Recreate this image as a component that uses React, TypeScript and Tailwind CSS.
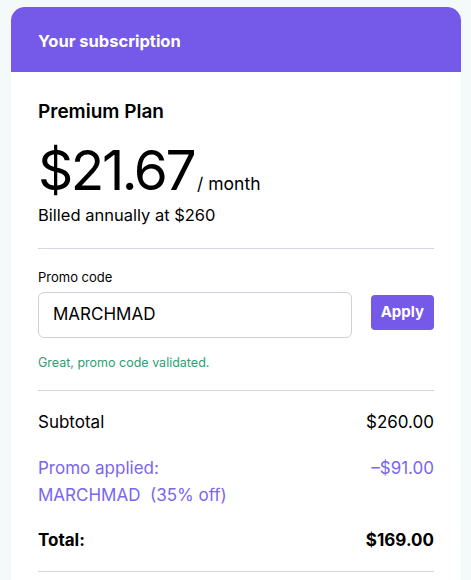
export default function App() {
  return (
    <div className="min-h-[580px] bg-[#f4f9fa] pt-[7px] pl-[11px] font-['Inter',sans-serif]">
      <div className="w-[450px] overflow-hidden rounded-t-[14px] bg-white shadow-[0_1px_3px_rgba(0,0,0,0.04)]">
        <div className="flex h-[65px] items-center bg-[#7559e8] px-[27px] pt-[3px]">
          <h2 className="text-[16.5px] font-bold text-white">Your subscription</h2>
        </div>

        <div className="px-[27px] pt-[27px]">
          <h3 className="text-[19px] font-semibold leading-[26px] text-black">Premium Plan</h3>
          <div className="mt-[15px] flex items-baseline gap-[3px]">
            <span className="text-[55px] leading-[60px] tracking-[-0.045em] text-black">$21.67</span>
            <span className="text-[17.5px] text-black">/ month</span>
          </div>
          <p className="mt-[4px] text-[16.5px] leading-[22px] text-black">Billed annually at $260</p>

          <div className="mt-[22px] h-px bg-[#d6d6e0]" />

          <label className="mt-[19px] block text-[13px] leading-[18px] text-black">Promo code</label>
          <div className="mt-[6px] flex items-start gap-[19px]">
            <div className="flex h-[46px] flex-1 items-center rounded-[6px] border border-[#d0cfdc] px-[14px] text-[17px] text-black">
              MARCHMAD
            </div>
            <button className="mt-[3px] h-[35px] rounded-[4px] bg-[#7559e8] px-[10px] text-[15px] font-bold text-white">
              Apply
            </button>
          </div>
          <p className="mt-[16px] text-[12.5px] leading-[18px] text-[#2e9e74]">Great, promo code validated.</p>

          <div className="mt-[18px] h-px bg-[#d6d6e0]" />

          <div className="flex justify-between pt-[20px] text-[17px] leading-[22px] text-black">
            <span>Subtotal</span>
            <span>$260.00</span>
          </div>
          <div className="mt-[22px] flex justify-between text-[17px] leading-[27px] text-[#7a66f0]">
            <span>
              Promo applied:
              <br />
              MARCHMAD&nbsp;&nbsp;(35% off)
            </span>
            <span>–$91.00</span>
          </div>
          <div className="mt-[20px] flex justify-between text-[17px] font-bold leading-[22px] text-black">
            <span>Total:</span>
            <span>$169.00</span>
          </div>
          <div className="mt-[20px] h-px bg-[#d6d6e0]" />
          <div className="h-[10px]" />
        </div>
      </div>
    </div>
  );
}
